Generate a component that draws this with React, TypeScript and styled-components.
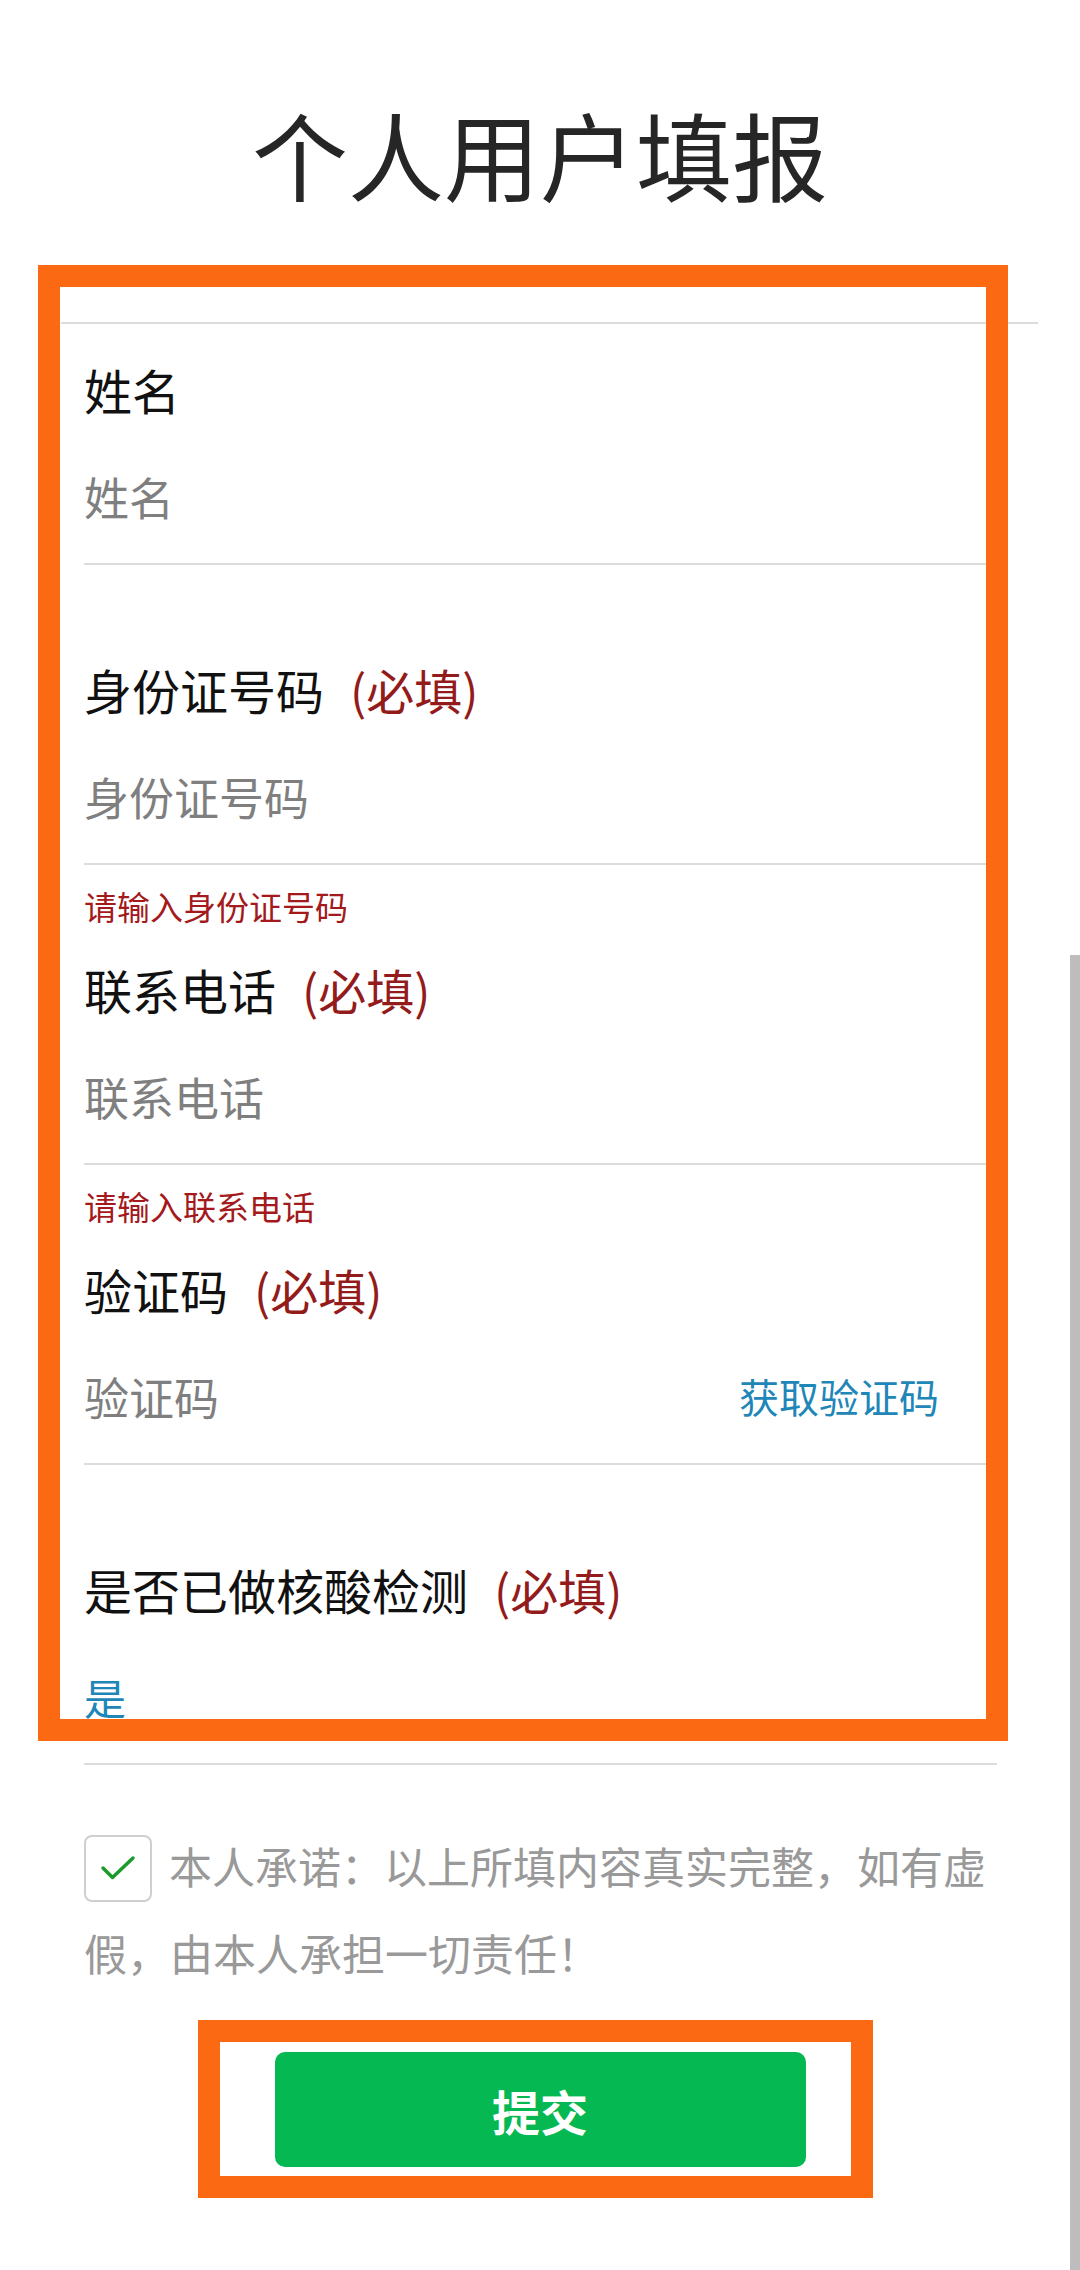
import React from 'react';
import styled, { createGlobalStyle } from 'styled-components';

const GlobalStyle = createGlobalStyle`
  html, body {
    margin: 0;
    padding: 0;
    background: #fff;
  }
  body {
    font-family: "Noto Sans CJK SC", "Noto Sans", sans-serif;
  }
`;

const Page = styled.div`
  position: relative;
  width: 1080px;
  min-height: 2270px;
  background: #fff;
  overflow: hidden;
`;

const Title = styled.h1`
  margin: 0;
  padding-top: 105px;
  height: 96px;
  line-height: 96px;
  font-size: 96px;
  font-weight: 400;
  text-align: center;
  color: #262626;
`;

const FormArea = styled.div`
  position: relative;
  margin-top: 121px;
`;

const TopRule = styled.div`
  margin-left: 61px;
  width: 977px;
  height: 2px;
  background: #dcdcdc;
`;

const Field = styled.div`
  margin: 0 83px 0 84px;
  padding-top: 35px;
  padding-bottom: 27px;
  border-bottom: 2px solid #dcdcdc;
`;

const Label = styled.div`
  height: 60px;
  line-height: 60px;
  font-size: 48px;
  color: #111;
  white-space: nowrap;
`;

const Required = styled.span`
  margin-left: 26px;
  color: #931b1b;
`;

const InputRow = styled.div`
  margin-top: 37px;
  height: 80px;
  display: flex;
  align-items: center;
  justify-content: space-between;
`;

const Placeholder = styled.span<{ $tone?: 'muted' | 'link' }>`
  font-size: ${p => (p.$tone === 'link' ? '42px' : '45px')};
  color: ${p => (p.$tone === 'link' ? '#1f86b8' : '#7f7f7f')};
`;

const CodeLink = styled.span`
  margin-right: 58px;
  font-size: 40px;
  color: #1f86b8;
`;

const ErrorSlot = styled.div`
  margin-left: 84px;
  height: 59px;
  padding-top: 24px;
  box-sizing: border-box;
  font-size: 33px;
  line-height: 34px;
  color: #a3191c;
`;

const Highlight = styled.div`
  position: absolute;
  pointer-events: none;
  border: 22px solid #fb6a12;
  box-sizing: border-box;
`;

const Promise = styled.p`
  margin: 57px 0 0 84px;
  width: 913px;
  font-size: 43px;
  line-height: 87px;
  color: #999;
`;

const CheckBox = styled.span`
  display: inline-flex;
  align-items: center;
  justify-content: center;
  width: 68px;
  height: 67px;
  margin-right: 17px;
  box-sizing: border-box;
  border: 2px solid #cfcfcf;
  border-radius: 8px;
  vertical-align: middle;
  position: relative;
  top: -4px;
`;

const SubmitWrap = styled.div`
  position: relative;
  display: flex;
  justify-content: center;
  margin-top: 56px;
  padding-bottom: 100px;
`;

const SubmitButton = styled.button`
  width: 531px;
  height: 115px;
  border: none;
  border-radius: 10px;
  background: #06b852;
  color: #fff;
  font-family: "Noto Sans CJK SC", sans-serif;
  font-size: 48px;
  font-weight: 700;
  cursor: pointer;
`;

const ScrollBar = styled.div`
  position: absolute;
  right: 0;
  top: 955px;
  bottom: 0;
  width: 10px;
  background: #bdbdbd;
`;

type FieldDef = {
  label: string;
  required?: boolean;
  placeholder: string;
  action?: string;
  value?: boolean;
  error?: string;
};

const fields: FieldDef[] = [
  { label: '姓名', placeholder: '姓名' },
  { label: '身份证号码', required: true, placeholder: '身份证号码', error: '请输入身份证号码' },
  { label: '联系电话', required: true, placeholder: '联系电话', error: '请输入联系电话' },
  { label: '验证码', required: true, placeholder: '验证码', action: '获取验证码' },
  { label: '是否已做核酸检测', required: true, placeholder: '是', value: true },
];

const App = () => {
  return (
    <Page>
      <GlobalStyle />
      <Title>个人用户填报</Title>

      <FormArea>
        <TopRule />
        {fields.map((f, i) => (
          <React.Fragment key={f.label}>
            <Field>
              <Label>
                {f.label}
                {f.required && <Required>(必填)</Required>}
              </Label>
              <InputRow>
                <Placeholder $tone={f.value ? 'link' : 'muted'}>{f.placeholder}</Placeholder>
                {f.action && <CodeLink>{f.action}</CodeLink>}
              </InputRow>
            </Field>
            {i < fields.length - 1 && <ErrorSlot>{f.error}</ErrorSlot>}
          </React.Fragment>
        ))}
        <Highlight style={{ left: 38, top: -57, width: 970, height: 1476 }} />
      </FormArea>

      <Promise>
        <CheckBox>
          <svg width="36" height="28" viewBox="0 0 36 28">
            <path d="M3 14 L12.5 23.5 L33 4" fill="none" stroke="#1c9a2c" strokeWidth="3.5" strokeLinecap="round" strokeLinejoin="round" />
          </svg>
        </CheckBox>
        本人承诺：以上所填内容真实完整，如有虚假，由本人承担一切责任！
      </Promise>

      <SubmitWrap>
        <SubmitButton>提交</SubmitButton>
        <Highlight style={{ left: 198, top: -32, width: 675, height: 178 }} />
      </SubmitWrap>

      <ScrollBar />
    </Page>
  );
};

export default App;
